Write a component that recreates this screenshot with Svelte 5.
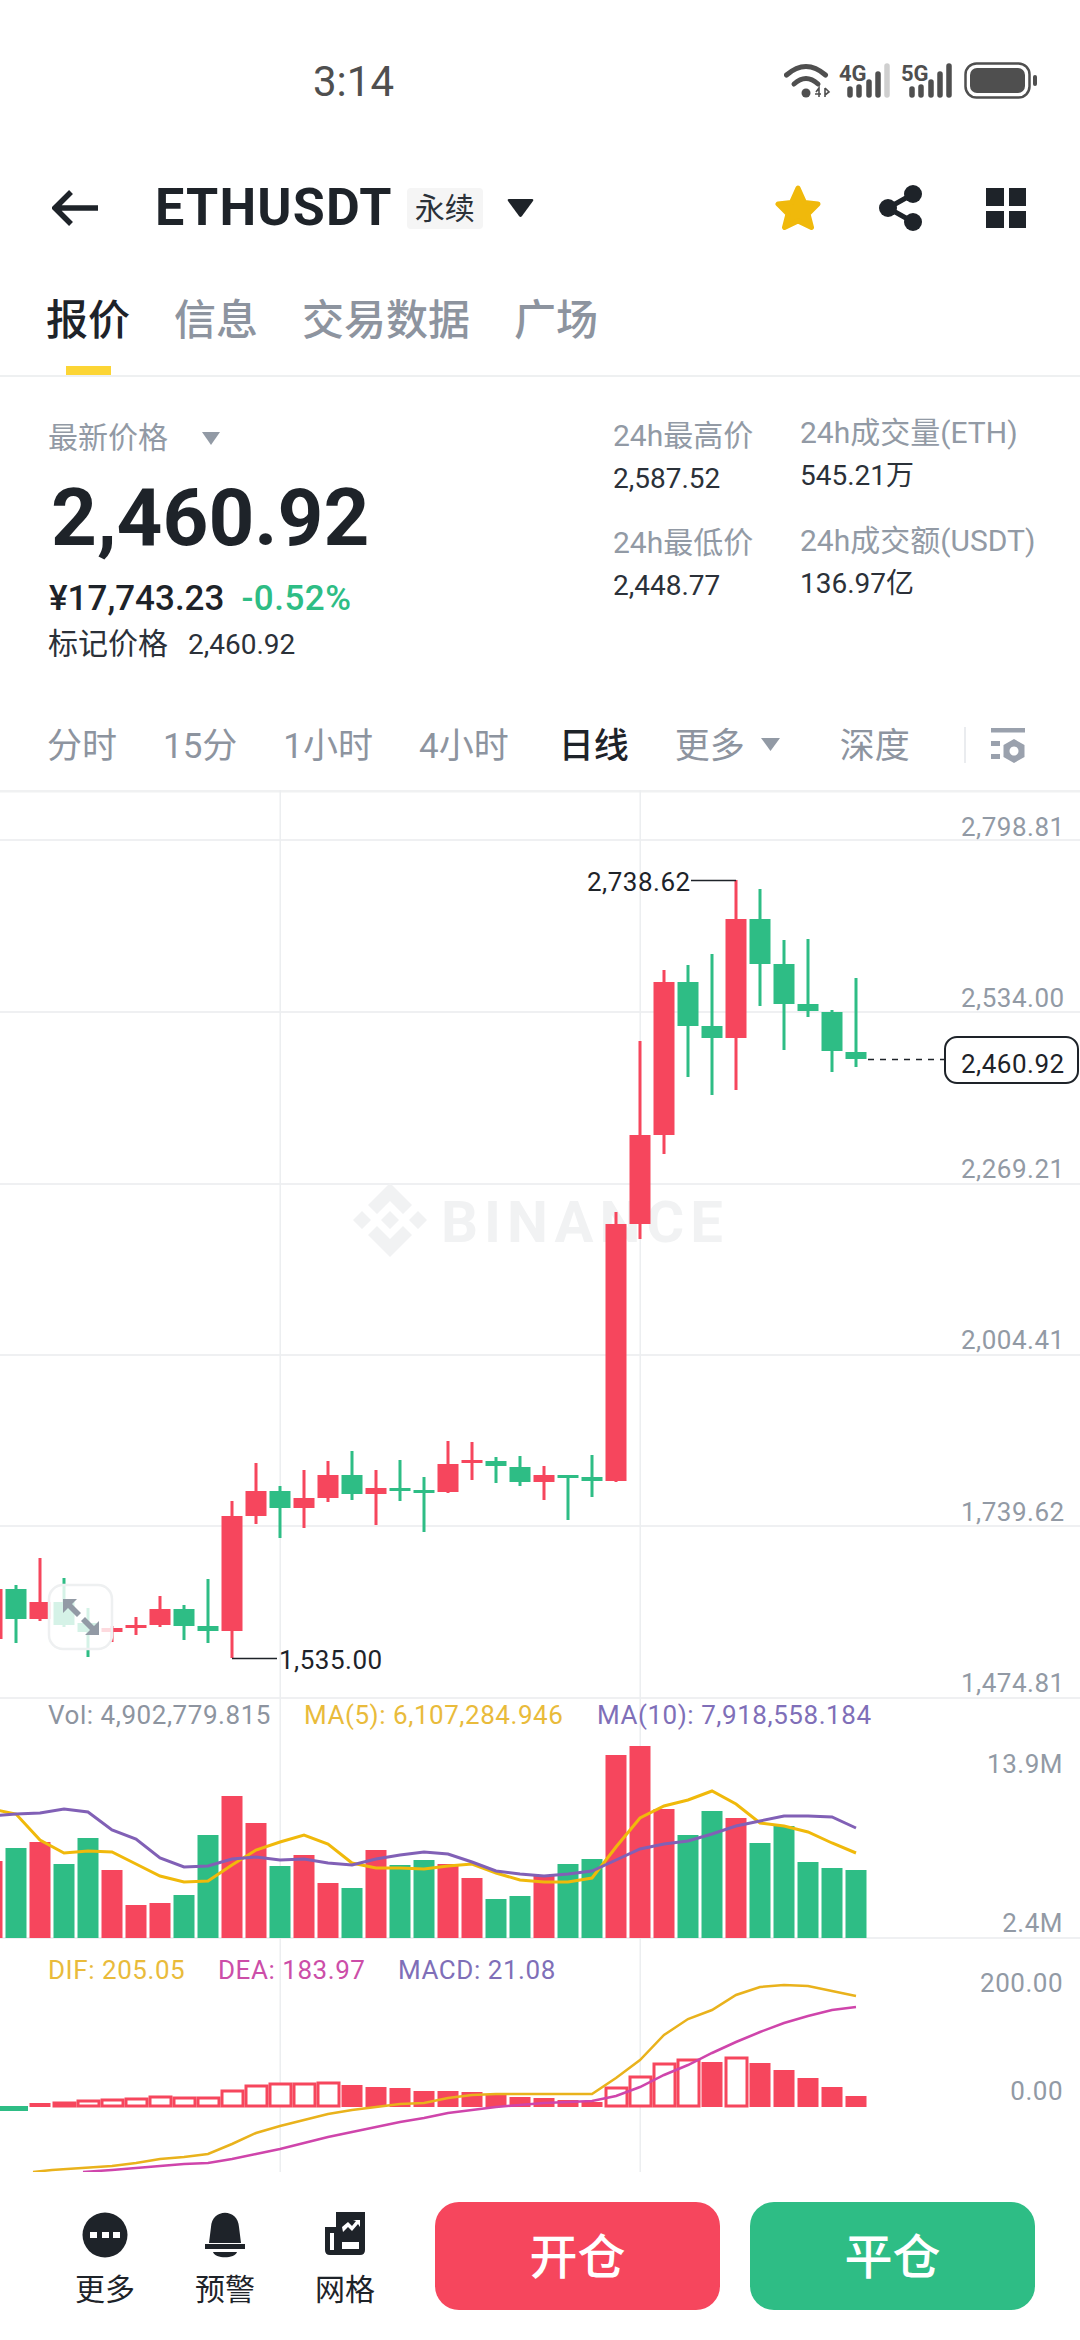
<script>
  const RED = '#f6465d';
  const GREEN = '#2ebd85';
  // x-centre, high, body top, body bottom, low, up?
  const candles = [
    [-8,1585,1589,1639,1645,1],[16,1585,1589,1619,1643,0],[40,1558,1602,1619,1621,1],[64,1578,1602,1625,1627,0],
    [88,1608,1623,1632,1657,0],[112,1626,1628,1632,1642,1],[136,1617,1625,1628,1635,1],[160,1596,1609,1625,1627,1],
    [184,1605,1609,1626,1640,0],[208,1579,1626,1631,1643,0],[232,1501,1516,1631,1658,1],[256,1463,1491,1516,1524,1],
    [280,1486,1491,1508,1538,0],[304,1470,1498,1508,1528,1],[328,1461,1475,1498,1502,1],[352,1451,1475,1494,1500,0],
    [376,1470,1488,1494,1525,1],[400,1460,1488,1491,1501,0],[424,1477,1490,1493,1532,0],[448,1441,1464,1492,1493,1],
    [472,1442,1460,1463,1480,1],[496,1457,1461,1466,1483,0],[520,1456,1467,1482,1486,0],[544,1466,1475,1482,1500,1],
    [568,1475,1475,1478,1520,0],[592,1455,1477,1481,1497,0],[616,1212,1224,1481,1482,1],[640,1041,1135,1224,1239,1],
    [664,970,982,1135,1154,1],[688,965,982,1026,1077,0],[712,954,1026,1038,1095,0],[736,880,919,1038,1090,1],
    [760,889,919,964,1006,0],[784,940,964,1004,1050,0],[808,939,1004,1011,1017,0],[832,1010,1012,1051,1072,0],
    [856,978,1052,1059,1067,0]
  ];
  const vol = [
    [-8,1861,1],[16,1848,0],[40,1842,1],[64,1864,0],[88,1838,0],[112,1870,1],[136,1905,1],[160,1903,1],[184,1895,0],
    [208,1835,0],[232,1796,1],[256,1823,1],[280,1866,0],[304,1855,1],[328,1883,1],[352,1888,0],[376,1850,1],[400,1865,0],
    [424,1860,0],[448,1864,1],[472,1878,1],[496,1899,0],[520,1896,0],[544,1875,1],[568,1864,0],[592,1859,0],[616,1755,1],
    [640,1746,1],[664,1809,1],[688,1835,0],[712,1811,0],[736,1818,1],[760,1843,0],[784,1826,0],[808,1862,0],[832,1868,0],[856,1870,0]
  ];
  const ma5 = [1809,1814,1840,1853,1851,1852,1864,1876,1882,1881,1865,1850,1842,1835,1844,1863,1868,1868,1869,1866,1864,1873,1880,1882,1882,1878,1847,1818,1806,1800,1791,1804,1823,1826,1832,1843,1853];
  const ma10 = [1816,1814,1813,1809,1812,1830,1839,1858,1867,1866,1859,1857,1860,1859,1863,1865,1859,1855,1852,1854,1862,1871,1874,1876,1874,1871,1860,1849,1844,1841,1834,1826,1821,1816,1816,1817,1828];
  const pts = (ys, start) => ys.map((y, i) => `${start + i * 24},${y}`).join(' ');
  // DIF / DEA start at the clipped bottom of the pane
  const dif = '33,2172 52,2170 ' + pts([2166,2163,2159,2157,2154,2144,2133,2126,2120,2114,2110,2107,2104,2103,2098,2095,2094,2094,2094,2094,2094,2078,2060,2035,2019,2010,1995,1987,1985,1986,1991,1996], 112);
  const dea = '83,2172 ' + pts([2170,2168,2166,2164,2163,2159,2154,2149,2143,2137,2132,2127,2122,2118,2113,2110,2107,2105,2103,2102,2101,2096,2087,2075,2065,2053,2042,2032,2023,2016,2010,2007], 112);
  // x-centre, top, hollow?
  const hist = [
    [40,2103,0],[64,2103,1],[88,2101,1],[112,2100,1],[136,2099,1],[160,2097,1],[184,2098,1],[208,2098,1],[232,2091,1],
    [256,2086,1],[280,2084,1],[304,2084,1],[328,2083,1],[352,2085,0],[376,2087,0],[400,2088,0],[424,2091,0],[448,2091,0],
    [472,2092,0],[496,2094,0],[520,2097,0],[544,2098,0],[568,2100,0],[592,2102,0],[616,2088,1],[640,2077,1],[664,2064,1],
    [688,2060,1],[712,2062,0],[736,2058,1],[760,2063,0],[784,2070,0],[808,2078,0],[832,2087,0],[856,2096,0]
  ];
  const grid = [840,1012,1184,1355,1526,1698];
  const axis = [['2,798.81',836],['2,534.00',1007],['2,269.21',1178],['2,004.41',1349],['1,739.62',1521],['1,474.81',1692]];
  const intervals = ['分时','15分','1小时','4小时'];
</script>

<div class="page">
  <div class="status">
    <span class="time">3:14</span>
    <svg class="status-icons" width="255" height="40" viewBox="783 61 255 40">
      <g fill="none" stroke="#4f4f4f" stroke-width="5" stroke-linecap="round">
        <path d="M785.500 75 Q805 58 824.500 75"/>
        <path d="M793 84 Q805 73 817 84"/>
      </g>
      <circle cx="805" cy="93" r="4.500" fill="#4f4f4f"/>
      <path d="M815 92 L818 88 V97 M814 94 H820 M824 88 V97 M824 88 L828 92 L824 95" fill="none" stroke="#4f4f4f" stroke-width="1.600"/>
      <text class="sig" x="838" y="81">4G</text>
      <text class="sig" x="900" y="81">5G</text>
      <g stroke-width="5.500" stroke-linecap="round" stroke="#4f4f4f">
        <path d="M849 89 V95 M858 87 V95 M868 82 V95 M877 74 V95"/>
        <path d="M886 66 V95" stroke="#cfcfcf"/>
        <path d="M911 89 V95 M920 87 V95 M930 82 V95 M939 74 V95 M948 66 V95"/>
      </g>
      <rect x="964.500" y="63.500" width="64" height="34" rx="11" fill="none" stroke="#4f4f4f" stroke-width="2.500"/>
      <rect x="969" y="68" width="55" height="25" rx="7" fill="#4f4f4f"/>
      <rect x="1032" y="75" width="4" height="11" rx="2" fill="#4f4f4f"/>
    </svg>
  </div>

  <div class="head">
    <svg class="back" width="46" height="36" viewBox="52 190 46 36">
      <path d="M98 208 H57 M71 192 L55 208 L71 224" fill="none" stroke="#1e2329" stroke-width="5.500"/>
    </svg>
    <span class="symbol">ETHUSDT</span>
    <span class="tag">永续</span>
    <svg class="caret" width="27" height="20" viewBox="0 0 27 20"><path d="M2 1 H25 Q27 1 26 3 L15 18 Q13.500 20 12 18 L1 3 Q0 1 2 1Z" fill="#1e2329"/></svg>
    <div class="head-actions">
      <svg width="46" height="46" viewBox="774 184 46 46"><path d="M797 187 L803.500 201.500 L817 203 L807 213 L810.500 226.500 L797 220 L783.500 226.500 L787 213 L777 203 L790.500 201.500 Z" fill="#f0b90b" stroke="#f0b90b" stroke-width="5" stroke-linejoin="round"/></svg>
      <svg width="46" height="46" viewBox="875 184 46 46" class="share">
        <path d="M911 193 L886 207 L911 221" fill="none" stroke="#1e2329" stroke-width="5"/>
        <circle cx="886" cy="207" r="9" fill="#1e2329"/><circle cx="911" cy="193" r="9" fill="#1e2329"/><circle cx="911" cy="221" r="9" fill="#1e2329"/>
      </svg>
      <div class="squares"><i></i><i></i><i></i><i></i></div>
    </div>
  </div>

  <div class="tabs">
    <div class="tab active">报价<b></b></div>
    <div class="tab">信息</div>
    <div class="tab">交易数据</div>
    <div class="tab">广场</div>
  </div>

  <div class="quote">
    <div class="q-left">
      <div class="q-label">最新价格<svg width="18" height="13" viewBox="0 0 18 13"><path d="M0 0 H18 L9 13Z" fill="#929aa5"/></svg></div>
      <div class="q-price">2,460.92</div>
      <div class="q-sub">¥17,743.23<span class="q-pct">-0.52%</span></div>
      <div class="q-mark">标记价格<span>2,460.92</span></div>
    </div>
    <div class="q-stats">
      <div class="stat s1"><div class="l">24h最高价</div><div class="v">2,587.52</div></div>
      <div class="stat s2"><div class="l">24h成交量(ETH)</div><div class="v">545.21万</div></div>
      <div class="stat s3"><div class="l">24h最低价</div><div class="v">2,448.77</div></div>
      <div class="stat s4"><div class="l">24h成交额(USDT)</div><div class="v">136.97亿</div></div>
    </div>
  </div>

  <div class="intervals">
    {#each intervals as t}<span>{t}</span>{/each}
    <span class="on">日线</span>
    <span class="more">更多<svg width="19" height="13" viewBox="0 0 19 13"><path d="M0 0 H19 L9.500 13Z" fill="#929aa5"/></svg></span>
    <span class="depth">深度</span>
    <i class="iv-div"></i>
    <svg class="iv-set" width="36" height="36" viewBox="990 727 36 36">
      <g fill="#9aa1ad">
        <rect x="991" y="728" width="34" height="4.500"/><rect x="991" y="741" width="9" height="5"/><rect x="991" y="754" width="9" height="5"/>
        <path fill-rule="evenodd" d="M1014 739 L1024.500 745 V757 L1014 763 L1003.500 757 V745 Z M1014 746.500 a4.500 4.500 0 1 0 0.010 0Z"/>
      </g>
    </svg>
  </div>

  <svg class="chart" width="1080" height="1385" viewBox="0 790 1080 1385">
    <defs><clipPath id="macd"><rect x="0" y="1975" width="1080" height="197"/></clipPath></defs>
    <rect x="0" y="790" width="1080" height="2.500" fill="#f0f1f2"/>
    {#each grid as y}<rect x="0" y={y - 1} width="1080" height="2" fill="#eff0f2"/>{/each}
    <rect x="0" y="1937" width="1080" height="2" fill="#eff0f2"/>
    <rect x="279.500" y="790" width="1.500" height="1382" fill="#eceef0"/>
    <rect x="639.500" y="790" width="1.500" height="1382" fill="#eceef0"/>

    <g fill="#f1f2f3">
      <path fill-rule="evenodd" d="M390 1183 L412 1205 L403 1214 L390 1201 L377 1214 L368 1205 Z M353 1220 L362 1211 L371 1220 L362 1229 Z M427 1220 L418 1229 L409 1220 L418 1211 Z M390 1211 L399 1220 L390 1229 L381 1220 Z M390 1257 L368 1235 L377 1226 L390 1239 L403 1226 L412 1235 Z"/>
      <text class="wm" x="441" y="1242">BINANCE</text>
    </g>

    {#each candles as [x, hi, top, bot, lo, up]}
      <rect x={x - 1.5} y={hi} width="3" height={lo - hi} fill={up ? RED : GREEN}/>
      <rect x={x - 10.5} y={top} width="21" height={bot - top} fill={up ? RED : GREEN}/>
    {/each}

    {#each axis as [t, y]}<text class="ax" x="961" y={y}>{t}</text>{/each}

    <path d="M691 880.500 H736 M232 1658.500 H277" stroke="#1e2329" stroke-width="1.500" fill="none"/>
    <text class="ax dark" x="587" y="891">2,738.62</text>
    <text class="ax dark" x="279" y="1669">1,535.00</text>
    <path d="M868 1059.500 H945" stroke="#1e2329" stroke-width="1.500" stroke-dasharray="6 6" fill="none"/>
    <rect x="945" y="1037" width="133" height="46" rx="12" fill="#fff" stroke="#1e2329" stroke-width="2"/>
    <text class="ax dark" x="961" y="1073">2,460.92</text>

    <rect x="49" y="1585" width="63" height="64" rx="14" fill="#fff" fill-opacity="0.8" stroke="#eef0f1" stroke-width="2.500"/>
    <g fill="#929aa5">
      <path d="M63 1599 H77 L72 1604 L81 1613 L77 1617 L68 1608 L63 1613 Z"/>
      <path d="M99 1635 H85 L90 1630 L81 1621 L85 1617 L94 1626 L99 1621 Z"/>
    </g>

    <text class="lg gray" x="48" y="1724">Vol: 4,902,779.815</text>
    <text class="lg yellow" x="304" y="1724">MA(5): 6,107,284.946</text>
    <text class="lg purple" x="597" y="1724">MA(10): 7,918,558.184</text>
    <text class="ax" x="1063" y="1773" text-anchor="end">13.9M</text>
    <text class="ax" x="1063" y="1932" text-anchor="end">2.4M</text>
    {#each vol as [x, top, up]}
      <rect x={x - 10.5} y={top} width="21" height={1938 - top} fill={up ? RED : GREEN}/>
    {/each}
    <polyline points={pts(ma5, -8)} fill="none" stroke="#f0b90b" stroke-width="3"/>
    <polyline points={pts(ma10, -8)} fill="none" stroke="#8160b6" stroke-width="3"/>

    <text class="lg yellow" x="48" y="1979">DIF: 205.05</text>
    <text class="lg pink" x="218" y="1979">DEA: 183.97</text>
    <text class="lg purple" x="398" y="1979">MACD: 21.08</text>
    <text class="ax" x="1063" y="1992" text-anchor="end">200.00</text>
    <text class="ax" x="1063" y="2100" text-anchor="end">0.00</text>
    <rect x="0" y="2106" width="28" height="5" fill={GREEN}/>
    {#each hist as [x, top, hollow]}
      {#if hollow}
        <rect x={x - 10} y={top} width="21" height={2106 - top} fill="#fff" stroke={RED} stroke-width="3"/>
      {:else}
        <rect x={x - 10.5} y={top} width="21" height={2107 - top} fill={RED}/>
      {/if}
    {/each}
    <g clip-path="url(#macd)" fill="none" stroke-width="2.500">
      <polyline points={dif} stroke="#e9b21c"/>
      <polyline points={dea} stroke="#cf45ab"/>
    </g>
  </svg>

  <div class="bottom">
    <div class="act">
      <svg width="46" height="46" viewBox="0 0 46 46"><circle cx="23" cy="23" r="22.500" fill="#1e2329"/><path d="M8 20 H15 V26 H8Z M20 20 H27 V26 H20Z M31 20 H38 V26 H31Z" fill="#fff"/></svg>
      <span>更多</span>
    </div>
    <div class="act">
      <svg width="42" height="46" viewBox="0 0 42 46"><path d="M1 32 H41 V37 H1 Z M5 31 L7 15 C8 -4 34 -4 35 15 L37 31 Z M9 40 H33 C31 47 11 47 9 40 Z" fill="#1e2329"/></svg>
      <span>预警</span>
    </div>
    <div class="act">
      <svg width="42" height="46" viewBox="0 0 42 46"><path fill-rule="evenodd" d="M12 0 H41 V38 Q41 43 36 43 H6 Q1 43 1 38 V15 H12 Z M6 21 V38 H10 V21 Z M18 30 V37 H35 V30 Z M18 15 L24 10 L28 14 L32 9 L29 8 H36 V15 L34 12 L28 19 L24 15 L19 20 Z" fill="#1e2329"/></svg>
      <span>网格</span>
    </div>
    <div class="btn open">开仓</div>
    <div class="btn close">平仓</div>
  </div>
</div>

<style>
  :global(body) { margin: 0; background: #fff; }
  .page {
    width: 1080px; height: 2340px; overflow: hidden; background: #fff;
    font-family: Roboto, "Noto Sans CJK SC", sans-serif; color: #1e2329;
  }
  .status { height: 162px; display: flex; align-items: center; padding-left: 313px; box-sizing: border-box; }
  .time { font-size: 42px; color: #4f4f4f; line-height: 1; margin-top: 2px; }
  .status-icons { margin-left: 390px; }
  .sig { font-size: 22px; font-weight: 700; fill: #4f4f4f; }

  .head { height: 92px; display: flex; align-items: center; padding-left: 52px; }
  .back { flex: none; }
  .symbol { font-size: 52px; font-weight: 700; margin-left: 57px; line-height: 1; letter-spacing: 1.200px; }
  .tag { margin-left: 14px; background: #f5f5f5; width: 76px; height: 41px; font-size: 30px; line-height: 41px; text-align: center; border-radius: 4px; color: #2b3139; }
  .caret { margin-left: 24px; }
  .head-actions { margin-left: auto; padding-right: 54px; display: flex; align-items: center; }
  .share { margin-left: 56px; }
  .squares { margin-left: 63px; display: grid; grid-template-columns: 17.500px 17.500px; gap: 5px; }
  .squares i { display: block; height: 17.500px; background: #1e2329; }

  .tabs { height: 123px; box-sizing: border-box; border-bottom: 2px solid #eef0f1; display: flex; padding: 43px 0 0 46px; gap: 44px; }
  .tab { font-size: 42px; font-weight: 500; line-height: 48px; color: #8d949f; }
  .tab.active { color: #1e2329; }
  .tab b { display: block; width: 45px; height: 9px; margin: 21px auto 0; background: #fcd535; }

  .quote { height: 323px; box-sizing: border-box; padding-left: 48px; display: flex; }
  .q-left { width: 565px; }
  .q-label { margin-top: 41px; font-size: 30px; line-height: 40px; color: #929aa5; display: flex; align-items: center; gap: 34px; }
  .q-price { margin-top: 18px; margin-left: 3px; font-size: 80px; font-weight: 700; line-height: 84px; }
  .q-sub { margin-top: 21px; margin-left: 1px; font-size: 35px; font-weight: 500; line-height: 36px; }
  .q-pct { color: #2ebd85; margin-left: 17px; letter-spacing: 0.500px; }
  .q-mark { margin-top: 9px; font-size: 30px; line-height: 36px; color: #2b3139; }
  .q-mark span { font-size: 28px; margin-left: 20px; }
  .q-stats { display: grid; grid-template-columns: 187px auto; align-content: start; }
  .l { font-size: 30px; line-height: 40px; color: #929aa5; }
  .v { font-size: 28px; line-height: 40px; color: #2b3139; margin-top: 3px; }
  .s1 { margin-top: 39px; } .s2 { margin-top: 36px; }
  .s3 { margin-top: 24px; } .s4 { margin-top: 22px; }

  .intervals { height: 90px; box-sizing: border-box; padding: 0 0 0 47px; display: flex; align-items: center; gap: 46px; font-size: 35px; color: #8d949f; }
  .intervals span { line-height: 44px; margin-top: 4px; }
  .intervals .on { color: #1e2329; font-weight: 500; margin-left: 4px; }
  .more { display: flex; align-items: center; gap: 16px; }
  .more svg { margin-top: -6px; }
  .intervals .depth { margin-left: 14px; }
  .iv-div { display: block; width: 2px; height: 36px; background: #eaecef; margin-left: 8px; }
  .iv-set { margin-left: -22px; }

  .chart { display: block; }
  .wm { font-size: 58px; font-weight: 700; letter-spacing: 6px; }
  .ax { font-size: 26px; fill: #929aa5; font-family: Roboto, sans-serif; letter-spacing: 0.500px; }
  .ax.dark { fill: #1e2329; }
  .lg { font-size: 26px; font-family: Roboto, sans-serif; letter-spacing: 0.550px; }
  .gray { fill: #8d949f; } .yellow { fill: #e9bb3b; } .purple { fill: #7f6fb8; } .pink { fill: #cc4ea8; }

  .bottom { height: 165px; box-sizing: border-box; padding: 27px 45px 0 45px; display: flex; align-items: flex-start; }
  .act { width: 120px; margin-top: 10px; display: flex; flex-direction: column; align-items: center; }
  .act span { font-size: 30px; line-height: 36px; margin-top: 14px; }
  .act svg { height: 46px; }
  .btn { width: 285px; height: 108px; box-sizing: border-box; padding-top: 3px; border-radius: 24px; color: #fff; font-size: 48px; font-weight: 500; line-height: 105px; text-align: center; }
  .open { background: #f6465d; margin-left: 30px; }
  .close { background: #2ebd85; margin-left: 30px; }
</style>
